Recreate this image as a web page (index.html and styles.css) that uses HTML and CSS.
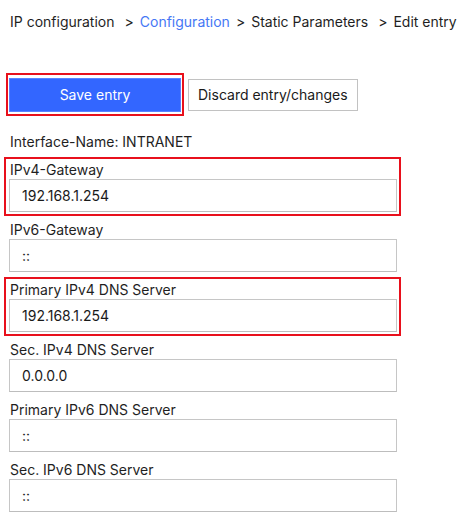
FILE: index.html
```html
<!DOCTYPE html>
<html lang="en">
<head>
<meta charset="utf-8">
<title>Edit entry</title>
<link rel="stylesheet" href="styles.css">
</head>
<body>
<div class="page">
  <nav class="breadcrumb">
    <span class="crumb crumb--trail">IP configuration</span>
    <span class="sep">&gt;</span>
    <a class="crumb crumb--link" href="#">Configuration</a>
    <span class="sep">&gt;</span>
    <span class="crumb crumb--trail">Static Parameters</span>
    <span class="sep">&gt;</span>
    <span class="crumb">Edit entry</span>
  </nav>

  <div class="actions">
    <div class="highlight highlight--button">
      <button class="btn btn--primary" type="button">Save entry</button>
    </div>
    <button class="btn btn--secondary" type="button">Discard entry/changes</button>
  </div>

  <div class="info">Interface-Name: INTRANET</div>

  <div class="fields">
    <div class="field field--highlight">
      <label class="field__label">IPv4-Gateway</label>
      <input class="field__input" type="text" value="192.168.1.254">
    </div>
    <div class="field">
      <label class="field__label">IPv6-Gateway</label>
      <input class="field__input" type="text" value="::">
    </div>
    <div class="field field--highlight">
      <label class="field__label">Primary IPv4 DNS Server</label>
      <input class="field__input" type="text" value="192.168.1.254">
    </div>
    <div class="field">
      <label class="field__label">Sec. IPv4 DNS Server</label>
      <input class="field__input" type="text" value="0.0.0.0">
    </div>
    <div class="field">
      <label class="field__label">Primary IPv6 DNS Server</label>
      <input class="field__input" type="text" value="::">
    </div>
    <div class="field">
      <label class="field__label">Sec. IPv6 DNS Server</label>
      <input class="field__input" type="text" value="::">
    </div>
  </div>
</div>
</body>
</html>
```

FILE: styles.css
```css
* { box-sizing: border-box; }

html, body {
  margin: 0;
  padding: 0;
  background: #ffffff;
}

body {
  font-family: Inter, "Noto Sans", "Liberation Sans", sans-serif;
  font-size: 14px;
  color: #1f1f1f;
}

.page {
  width: 468px;
  height: 530px;
  overflow: hidden;
  padding: 0 0 0 4px;
}

.breadcrumb {
  display: flex;
  align-items: center;
  height: 18px;
  line-height: 18px;
  margin-top: 13px;
  padding-left: 6px;
  white-space: nowrap;
}

.crumb { color: #1f1f1f; }
.crumb--trail { margin-right: 4px; }
.crumb--link { color: #4577f5; text-decoration: none; }

.sep {
  margin: 0 6px;
}

.actions {
  display: flex;
  align-items: center;
  gap: 4px;
  margin-top: 42px;
  padding-left: 2px;
}

.highlight--button {
  border: 2px solid #e8101c;
  padding: 3px 1px 2px 1px;
  display: flex;
}

.btn {
  font-family: inherit;
  font-size: 14px;
  line-height: 18px;
  cursor: pointer;
  margin: 0;
}

.btn--primary {
  width: 172px;
  height: 34px;
  background: #3366ff;
  color: #ffffff;
  border: 1px solid #5a82ff;
}

.btn--secondary {
  height: 32px;
  padding: 0 9px;
  background: #ffffff;
  color: #1a1a1a;
  border: 1px solid #c2c2c2;
}

.info {
  height: 20px;
  line-height: 20px;
  margin-top: 16px;
  padding-left: 6px;
}

.fields {
  display: flex;
  flex-direction: column;
  gap: 1px;
  margin-top: 5px;
}

.field {
  width: 397px;
  border: 2px solid transparent;
  padding: 0 2px 2px 3px;
  display: flex;
  flex-direction: column;
}

.field--highlight {
  border-color: #e8101c;
}

.field__label {
  height: 20px;
  line-height: 21px;
  padding-left: 1px;
}

.field__input {
  width: 388px;
  height: 33px;
  border: 1px solid #c6c6c6;
  border-bottom-color: #bdbdbd;
  padding: 0 12px;
  font-family: inherit;
  font-size: 14px;
  color: #1a1a1a;
  background: #ffffff;
  outline: none;
}
```
